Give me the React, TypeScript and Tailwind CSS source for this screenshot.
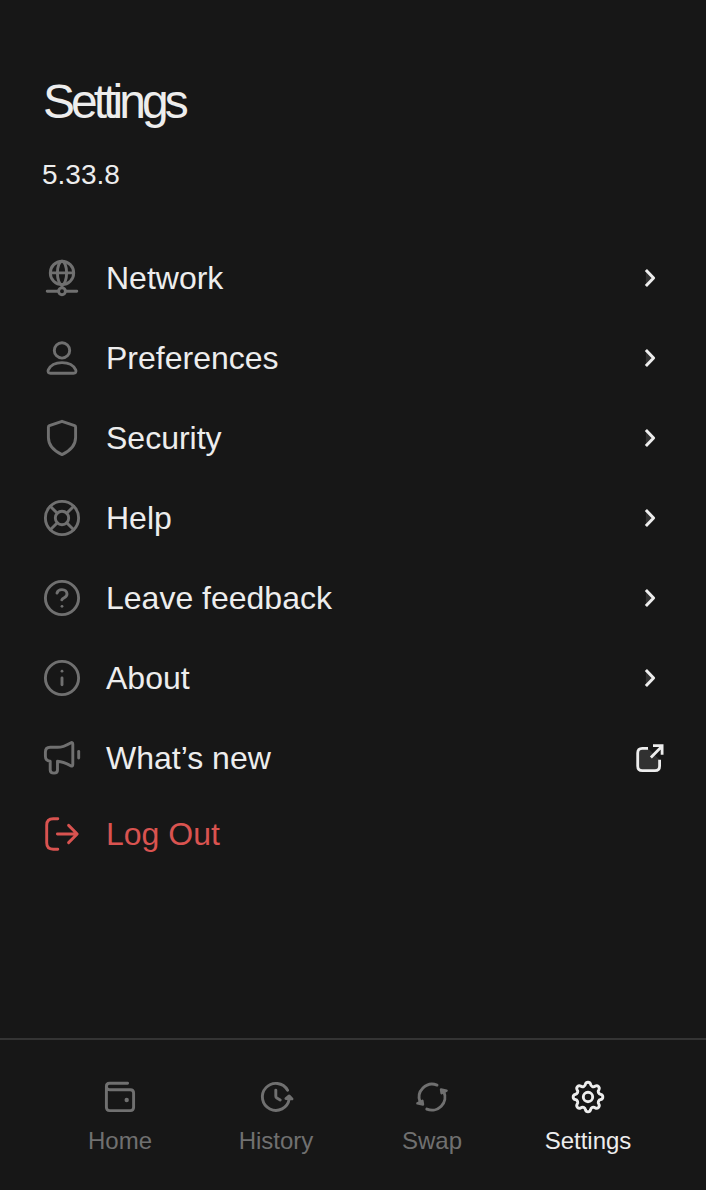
import type { ReactNode } from "react";

function Icon({ children, className = "", width = 2.9 }: { children: ReactNode; className?: string; width?: number }) {
  return (
    <svg
      viewBox="0 0 40 40"
      className={`size-10 shrink-0 ${className}`}
      fill="none"
      stroke="currentColor"
      strokeWidth={width}
      strokeLinecap="round"
      strokeLinejoin="round"
      aria-hidden="true"
    >
      {children}
    </svg>
  );
}

const chevron = (
  <Icon width={3}>
    <path d="M15.9 12 23.6 20 15.9 28" fill="currentColor" fillOpacity="0.12" strokeLinecap="butt" strokeLinejoin="round" />
  </Icon>
);

const external = (
  <Icon width={2.8}>
    <path
      d="M18 10.4H12.3Q7.7 10.4 7.7 15V28Q7.7 32.6 12.3 32.6H25Q29.6 32.6 29.6 28V21.7"
      fill="currentColor"
      fillOpacity="0.12"
      strokeLinecap="butt"
    />
    <path d="M20.9 19.4 32.2 8.1M23 7.7H32.1V16.8" strokeLinecap="butt" strokeLinejoin="miter" />
  </Icon>
);

const items: { label: string; icon: ReactNode; action: ReactNode }[] = [
  {
    label: "Network",
    action: chevron,
    icon: (
      <>
        <circle cx="20" cy="14.9" r="11.7" />
        <ellipse cx="20" cy="14.9" rx="4.6" ry="11.7" />
        <path d="M8.5 14.9h23M5.2 33.3h11.2M23.6 33.3h11.2M20 26.8v2.6" />
        <circle cx="20" cy="33.3" r="3.4" />
      </>
    ),
  },
  {
    label: "Preferences",
    action: chevron,
    icon: (
      <>
        <circle cx="20" cy="12.4" r="7.7" />
        <path d="M20 24.6C13.5 24.6 8.4 27.4 6.3 31.8 5.3 33.9 6.6 35.2 8.5 35.2H31.5C33.4 35.2 34.7 33.9 33.7 31.8 31.6 27.4 26.5 24.6 20 24.6Z" />
      </>
    ),
  },
  {
    label: "Security",
    action: chevron,
    icon: (
      <path d="M20 3.3 32.6 7.7Q33.6 8.1 33.6 9.2V19.5C33.6 27 28.7 32.6 20 36.6 11.3 32.6 6.4 27 6.4 19.5V9.2Q6.4 8.1 7.4 7.7Z" />
    ),
  },
  {
    label: "Help",
    action: chevron,
    icon: (
      <>
        <circle cx="20" cy="20" r="16.6" />
        <circle cx="20" cy="20" r="6.7" />
        <path d="M8.3 8.3 15.3 15.3M24.7 15.3 31.7 8.3M8.3 31.7 15.3 24.7M24.7 24.7 31.7 31.7" />
      </>
    ),
  },
  {
    label: "Leave feedback",
    action: chevron,
    icon: (
      <>
        <circle cx="20" cy="20" r="16.6" />
        <path d="M15 15.1C15.5 12.9 17.4 11.6 20 11.6 22.9 11.6 25 13.3 25 16.1 25 19.7 21 19.4 19.8 21.8" />
        <circle cx="20" cy="28.3" r="1.4" fill="currentColor" stroke="none" />
      </>
    ),
  },
  {
    label: "About",
    action: chevron,
    icon: (
      <>
        <circle cx="20" cy="20" r="16.6" />
        <path d="M20 20v6.8" />
        <circle cx="20" cy="13.2" r="1.4" fill="currentColor" stroke="none" />
      </>
    ),
  },
  {
    label: "What’s new",
    action: external,
    icon: (
      <>
        <path d="M8.2 9.3H15.5C20.5 9.3 24.3 7.4 28.6 4.9Q30.8 3.7 30.8 6.2V26.4Q30.8 28.9 28.6 27.7C24.5 25.4 20.6 23.6 15.5 23.2V32Q15.5 35.1 12 35.1 8.2 35.1 8.2 32V23.2Q3.4 22.6 3.4 18.2V14.1Q3.4 9.3 8.2 9.3Z" />
        <path d="M36.7 13.4v6.6" />
      </>
    ),
  },
];

// Eight round teeth: alternate convex and concave arcs around the centre.
const gearPath =
  Array.from({ length: 16 }, (_, i) => {
    const a = ((i - 0.5) * Math.PI) / 8;
    const p = `${(20 + 13.1 * Math.cos(a)).toFixed(2)} ${(20 + 13.1 * Math.sin(a)).toFixed(2)}`;
    return i === 0 ? `M${p}` : i % 2 ? `A2.65 2.65 0 0 1 ${p}` : `A2.9 2.9 0 0 0 ${p}`;
  }).join("") +
  `A2.9 2.9 0 0 0 ${(20 + 13.1 * Math.cos(Math.PI / 16)).toFixed(2)} ${(20 - 13.1 * Math.sin(Math.PI / 16)).toFixed(2)}Z`;

const tabs: { label: string; icon: ReactNode; active?: boolean }[] = [
  {
    label: "Home",
    icon: (
      <>
        <path d="M27.6 6.3H9.5Q6.4 6.3 6.4 9.5 6.4 12.7 9.5 12.7H30.3Q33.6 12.7 33.6 16V30.3Q33.6 33.6 30.3 33.6H9.7Q6.4 33.6 6.4 30.3V9.5" />
        <circle cx="26.7" cy="23" r="2.2" fill="currentColor" stroke="none" />
      </>
    ),
  },
  {
    label: "History",
    icon: (
      <>
        <path d="M31.6 13.2A13.5 13.5 0 1 0 33.2 22" />
        <path d="M29.9 21.6 33.2 19 36 21.9Z" fill="currentColor" />
        <path d="M19.8 13.1V19.3Q19.8 20.4 20.8 21L24.2 23" />
      </>
    ),
  },
  {
    label: "Swap",
    icon: (
      <>
        <path d="M25 8.1A13.1 13.1 0 0 0 8.1 25.2" />
        <path d="M11 27.5 5.4 26.4 10.4 23.8Z" fill="currentColor" strokeWidth="2.4" />
        <path d="M14.8 32.1A13.1 13.1 0 0 0 31.9 14.8" />
        <path d="M29 12.5 34.6 13.6 29.6 16.2Z" fill="currentColor" strokeWidth="2.4" />
      </>
    ),
  },
  {
    label: "Settings",
    active: true,
    icon: (
      <>
        <path d={gearPath} />
        <circle cx="20" cy="20" r="4.7" />
      </>
    ),
  },
];

export default function App() {
  return (
    <div className="flex h-[1190px] w-full flex-col overflow-hidden bg-[#171717] font-['Liberation_Sans',Arial,sans-serif] text-[#ededed]">
      <header className="px-[42px] pt-[74px]">
        <h1 className="pl-px text-[48px] leading-[56px] tracking-[-3.95px]">Settings</h1>
        <p className="mt-[29px] text-[28px] leading-[32px]">5.33.8</p>
      </header>

      <main className="flex flex-1 flex-col pt-[67px] pr-9 pl-[42px]">
        <ul className="flex flex-col gap-10">
          {items.map((item) => (
            <li key={item.label} className="flex h-10 items-center">
              <Icon className="text-[#707070]">{item.icon}</Icon>
              <span className="ml-6 flex-1 text-[32px] leading-10">{item.label}</span>
              {item.action}
            </li>
          ))}
        </ul>
        <button className="mt-9 flex h-10 items-center text-left text-[#d95350]">
          <Icon>
            <path d="M15.8 4.8H11.2Q4.7 4.8 4.7 11.2V28.8Q4.7 35.2 11.2 35.2H15.8M15.4 20H35M26.6 11.4 35.2 20 26.6 28.6" />
          </Icon>
          <span className="ml-6 text-[32px] leading-10">Log Out</span>
        </button>
      </main>

      <nav className="grid h-[152px] grid-cols-4 border-t-2 border-[#343434] pt-[37px] pr-10 pl-[42px]">
        {tabs.map((tab) => (
          <div
            key={tab.label}
            className={`flex flex-col items-center ${tab.active ? "text-[#ededed]" : "text-[#707070]"}`}
          >
            <Icon>{tab.icon}</Icon>
            <span className="mt-2 text-[24px] leading-8">{tab.label}</span>
          </div>
        ))}
      </nav>
    </div>
  );
}
